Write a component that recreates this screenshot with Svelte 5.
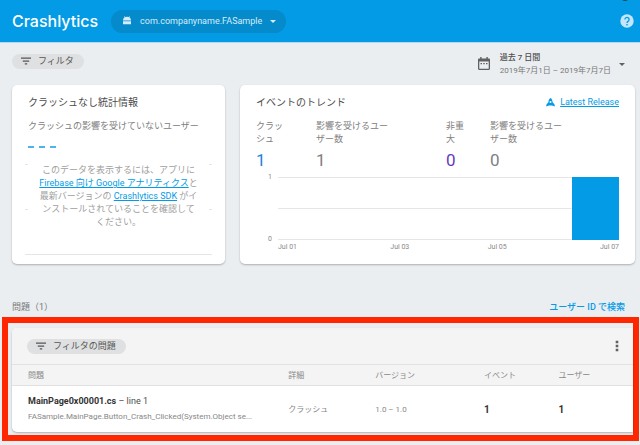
<script lang="ts">
	const stats = [
		{ label: 'クラッシュ', value: 1, kind: 'crash' },
		{ label: '影響を受けるユーザー数', value: 1, kind: 'users' },
		{ label: '非重大', value: 0, kind: 'minor' },
		{ label: '影響を受けるユーザー数', value: 0, kind: 'users' }
	];

	const days = [
		{ tick: 'Jul 01', count: 0 },
		{ tick: '', count: 0 },
		{ tick: 'Jul 03', count: 0 },
		{ tick: '', count: 0 },
		{ tick: 'Jul 05', count: 0 },
		{ tick: '', count: 0 },
		{ tick: 'Jul 07', count: 1 }
	];

	const issues = [
		{
			file: 'MainPage0x00001.cs',
			line: 'line 1',
			method: 'FASample.MainPage.Button_Crash_Clicked(System.Object se...',
			detail: 'クラッシュ',
			versions: '1.0 – 1.0',
			events: 1,
			users: 1
		}
	];
</script>

{#snippet filterIcon()}
	<svg width="12" height="12" viewBox="0 0 12 12" aria-hidden="true">
		<path d="M1 2.5h10v1.3H1zM2.8 5.4h6.4v1.3H2.8zM4.8 8.3h2.4v1.2H4.8z" fill="currentColor" />
	</svg>
{/snippet}

{#snippet caret()}
	<svg width="6" height="3" viewBox="0 0 6 3" aria-hidden="true">
		<path d="M0 0h6L3 3z" fill="currentColor" />
	</svg>
{/snippet}

<header>
	<h1>Crashlytics</h1>
	<button class="app-picker">
		<svg width="10" height="10" viewBox="0 0 10 10" aria-hidden="true">
			<path
				d="M1 4.4C1 2.8 1.7 1.9 2.6 1.4L1.9.5l.4-.3.8.9a5 5 0 0 1 3.8 0l.8-.9.4.3-.7.9C8.3 1.9 9 2.8 9 4.4zM1 5.2h8v3H1z"
				fill="currentColor"
			/>
		</svg>
		<span>com.companyname.FASample</span>
		{@render caret()}
	</button>
	<span class="avatar"></span>
	<button class="help" aria-label="ヘルプ">
		<svg width="14" height="14" viewBox="0 0 14 14" aria-hidden="true">
			<circle cx="7" cy="7" r="6.7" fill="#c3e6fa" />
			<path
				d="M4.9 5.5a2.1 2.1 0 1 1 3.5 1.6C7.5 7.8 7 8 7 9"
				fill="none"
				stroke="#039be5"
				stroke-width="1.3"
			/>
			<path d="M6.3 10h1.4v1.4H6.3z" fill="#039be5" />
		</svg>
	</button>
</header>

<main>
	<div class="toolbar">
		<button class="chip">{@render filterIcon()}フィルタ</button>
		<button class="dates">
			<svg width="12" height="14" viewBox="0 0 12 14" aria-hidden="true">
				<path
					d="M1.2 1.5h1V0h1.4v1.5h4.8V0h1.4v1.5h1c.7 0 1.2.5 1.2 1.2v9.1c0 .7-.5 1.2-1.2 1.2H1.2C.5 13 0 12.5 0 11.8V2.7c0-.7.5-1.2 1.2-1.2zM1.3 4.5v7.2h9.4V4.5z"
					fill="currentColor"
					fill-rule="evenodd"
				/>
				<path d="M2.5 6H4v1.2H2.5zM5.2 6h1.5v1.2H5.2zM8 6h1.500v1.200H8z" fill="currentColor" />
			</svg>
			<span class="range">
				<strong>過去 7 日間</strong>
				<span>2019年7月1日 – 2019年7月7日</span>
			</span>
			{@render caret()}
		</button>
	</div>

	<div class="cards">
		<section class="card">
			<h2>クラッシュなし統計情報</h2>
			<p class="label">クラッシュの影響を受けていないユーザー</p>
			<div class="dashes"><i></i><i></i><i></i></div>
			<div class="empty">
				<p>
					このデータを表示するには、アプリに<a href="#analytics">Firebase 向け Google アナリティクス</a>と最新バージョンの
					<a href="#sdk">Crashlytics SDK</a> がインストールされていることを確認して<br />ください。
				</p>
			</div>
		</section>

		<section class="card">
			<div class="card-head">
				<h2>イベントのトレンド</h2>
				<a class="release" href="#release">
					<svg width="9" height="9" viewBox="0 0 9 9" aria-hidden="true">
						<path
							d="M4.5 0C6 1 6.5 2.3 6.5 4L8.7 6.8V8.500L6 7.400H3L.3 8.500V6.800L2.500 4C2.500 2.300 3 1 4.500 0zM4.500 3a1 1 0 1 0 0 2 1 1 0 0 0 0-2z"
							fill="currentColor"
							fill-rule="evenodd"
						/>
					</svg>
					<span>Latest Release</span>
				</a>
			</div>
			<dl class="stats">
				{#each stats as stat}
					<div class={stat.kind}>
						<dt>{stat.label}</dt>
						<dd>{stat.value}</dd>
					</div>
				{/each}
			</dl>
			<div class="chart">
				<div class="scale"><span>1</span><span>0</span></div>
				<div class="plot">
					{#each days as day}
						<div class="bar" style="height: {day.count * 100}%"></div>
					{/each}
				</div>
				<div class="ticks">
					{#each days as day}
						<span>{day.tick}</span>
					{/each}
				</div>
			</div>
		</section>
	</div>

	<div class="issues-head">
		<h3>問題（1）</h3>
		<a href="#search">ユーザー ID で検索</a>
	</div>
</main>

<div class="highlight">
	<section class="issues">
		<div class="issues-bar">
			<button class="chip">{@render filterIcon()}フィルタの問題</button>
			<button class="more" aria-label="メニュー">
				<svg width="4" height="12" viewBox="0 0 4 12" aria-hidden="true">
					<path d="M.7.7h2.6v2.6H.7zM.7 4.7h2.6v2.6H.7zM.7 8.7h2.6v2.6H.7z" fill="currentColor" />
				</svg>
			</button>
		</div>
		<table>
			<thead>
				<tr>
					<th class="issue">問題</th>
					<th class="detail">詳細</th>
					<th class="version">バージョン</th>
					<th class="count">イベント</th>
					<th class="count">ユーザー</th>
				</tr>
			</thead>
			<tbody>
				{#each issues as issue}
					<tr>
						<td class="issue">
							<div class="file"><strong>{issue.file}</strong> – {issue.line}</div>
							<div class="method">{issue.method}</div>
						</td>
						<td>{issue.detail}</td>
						<td>{issue.versions}</td>
						<td class="number">{issue.events}</td>
						<td class="number">{issue.users}</td>
					</tr>
				{/each}
			</tbody>
		</table>
	</section>
</div>

<style>
	:global(body) {
		background: #ebeef1;
		color: #4d4d4d;
		font-family: Roboto, 'Noto Sans CJK JP', sans-serif;
		font-size: 9px;
		line-height: 13px;
	}

	h1,
	h2,
	h3,
	p,
	dl,
	dd {
		margin: 0;
	}

	button {
		display: flex;
		align-items: center;
		border: 0;
		padding: 0;
		background: none;
		color: inherit;
		font: inherit;
		cursor: pointer;
	}

	a {
		color: #039be5;
	}

	svg {
		display: block;
		flex: none;
	}

	header {
		position: relative;
		display: flex;
		align-items: center;
		height: 42px;
		padding: 0 6px 0 12px;
		border-bottom: 1px solid #b3d9ee;
		background: #039be5;
		color: #fff;
	}

	h1 {
		font-family: Inter, sans-serif;
		font-size: 16px;
		font-weight: 500;
		line-height: 24px;
	}

	.app-picker {
		gap: 8px;
		height: 23px;
		margin-left: 13px;
		padding: 0 10px 0 11px;
		border-radius: 12px;
		background: #058acb;
		color: #d5edfa;
	}

	.help {
		margin-left: auto;
	}

	.avatar {
		position: absolute;
		top: -9px;
		right: 10px;
		width: 10px;
		height: 10px;
		border-radius: 50%;
		background: #0a4f50;
	}

	main {
		padding: 0 5px 0 12px;
	}

	.toolbar {
		display: flex;
		align-items: center;
		justify-content: space-between;
		height: 42px;
		padding-right: 10px;
	}

	.chip {
		gap: 6px;
		height: 15px;
		padding: 0 10px 0 8px;
		border-radius: 8px;
		background: #dfe0e1;
		color: #555;
	}

	.toolbar .chip {
		margin-bottom: 6px;
	}

	.dates {
		color: #616161;
		font-size: 8px;
		text-align: left;
	}

	.range {
		margin: 0 8px 0 10px;
		color: #777;
	}

	.range > * {
		display: block;
	}

	.range strong {
		color: #4d4d4d;
		font-weight: 500;
	}

	.cards {
		display: grid;
		grid-template-columns: 213fr 395fr;
		gap: 15px;
	}

	.card {
		padding: 10px 16px 9px;
		border-radius: 5px;
		background: #fff;
		box-shadow: 0 1px 2px #0004;
	}

	h2 {
		color: #4d4d4d;
		font-size: 10px;
		font-weight: 400;
		line-height: 15px;
	}

	.label {
		margin-top: 10px;
		color: #808080;
	}

	.dashes {
		display: flex;
		gap: 5px;
		margin: 13px 0 16px;
	}

	.dashes i {
		width: 6px;
		height: 2px;
		background: #4db4ea;
	}

	.empty {
		height: 91px;
		margin: 0 -3px;
		background: repeating-linear-gradient(#e6e6e6 0 1px, #fff 1px 45px);
	}

	.empty p {
		margin: 0 3px;
		padding: 0 10px;
		background: #fff;
		color: #a0a0a0;
		text-align: center;
	}

	.card-head {
		display: flex;
		align-items: center;
		justify-content: space-between;
	}

	.release {
		display: flex;
		align-items: center;
		gap: 5px;
		text-decoration: none;
	}

	.release span {
		text-decoration: underline;
	}

	.stats {
		display: grid;
		grid-template-columns: 60fr 130fr 44fr 129fr;
		margin-top: 10px;
		color: #808080;
	}

	.stats dt {
		width: 76px;
	}

	.stats .crash dt {
		width: 30px;
	}

	.stats .minor dt {
		width: 20px;
	}

	.stats dd {
		margin-top: 4px;
		font-size: 17px;
		line-height: 20px;
	}

	.stats .crash dd {
		color: #1a86dc;
	}

	.stats .minor dd {
		color: #673ab7;
	}

	.chart {
		display: grid;
		grid-template-columns: 22px 1fr;
		margin-top: 7px;
		color: #888;
		font-size: 7px;
	}

	.scale {
		display: flex;
		flex-direction: column;
		justify-content: space-between;
		margin: -6px 0;
		padding-right: 6px;
		text-align: right;
	}

	.plot,
	.ticks {
		display: grid;
		grid-template-columns: repeat(7, 1fr);
	}

	.plot {
		align-items: end;
		height: 63px;
		background: repeating-linear-gradient(#e6e6e6 0 1px, #fff 1px 31px);
	}

	.bar {
		margin-left: 2px;
		background: #039be5;
	}

	.ticks {
		grid-column: 2;
		margin-top: 1px;
		text-align: center;
	}

	.ticks span:first-child {
		text-align: left;
	}

	.ticks span:last-child {
		text-align: right;
	}

	.issues-head {
		display: flex;
		justify-content: space-between;
		padding: 37px 10px 3px 0;
	}

	h3 {
		color: #777;
		font-size: 9px;
		font-weight: 400;
	}

	.issues-head a {
		font-weight: 500;
		text-decoration: none;
	}

	.highlight {
		margin: 0 1px 0 2px;
		padding: 5px 0 3px 4px;
		border: 6px solid #ff2600;
	}

	.issues {
		overflow: hidden;
		border-radius: 5px 0 0 5px;
		background: #fff;
		box-shadow: 0 1px 2px #0004;
	}

	.issues-bar {
		display: flex;
		align-items: center;
		justify-content: space-between;
		height: 36px;
		padding: 0 14px 0 15px;
		background: #f4f4f4;
		color: #616161;
	}

	table {
		width: 100%;
		border-collapse: collapse;
		table-layout: fixed;
		color: #888;
		font-size: 8px;
		text-align: left;
	}

	th,
	td {
		padding: 0;
		font-weight: 400;
	}

	th {
		height: 20px;
		border-top: 1px solid #e2e2e2;
		border-bottom: 1px solid #e2e2e2;
		background: #f4f4f4;
	}

	td {
		height: 46px;
	}

	.issue {
		box-sizing: border-box;
		width: 44.5%;
		padding-left: 16px;
	}

	.detail {
		width: 14%;
	}

	.version {
		width: 17.5%;
	}

	.count {
		width: 12%;
	}

	.file {
		margin-bottom: 2px;
		color: #4d4d4d;
		font-size: 9px;
	}

	.file strong {
		color: #333;
		font-weight: 700;
	}

	.method {
		white-space: nowrap;
	}

	td.number {
		color: #333;
		font-size: 10px;
		font-weight: 700;
	}
</style>
